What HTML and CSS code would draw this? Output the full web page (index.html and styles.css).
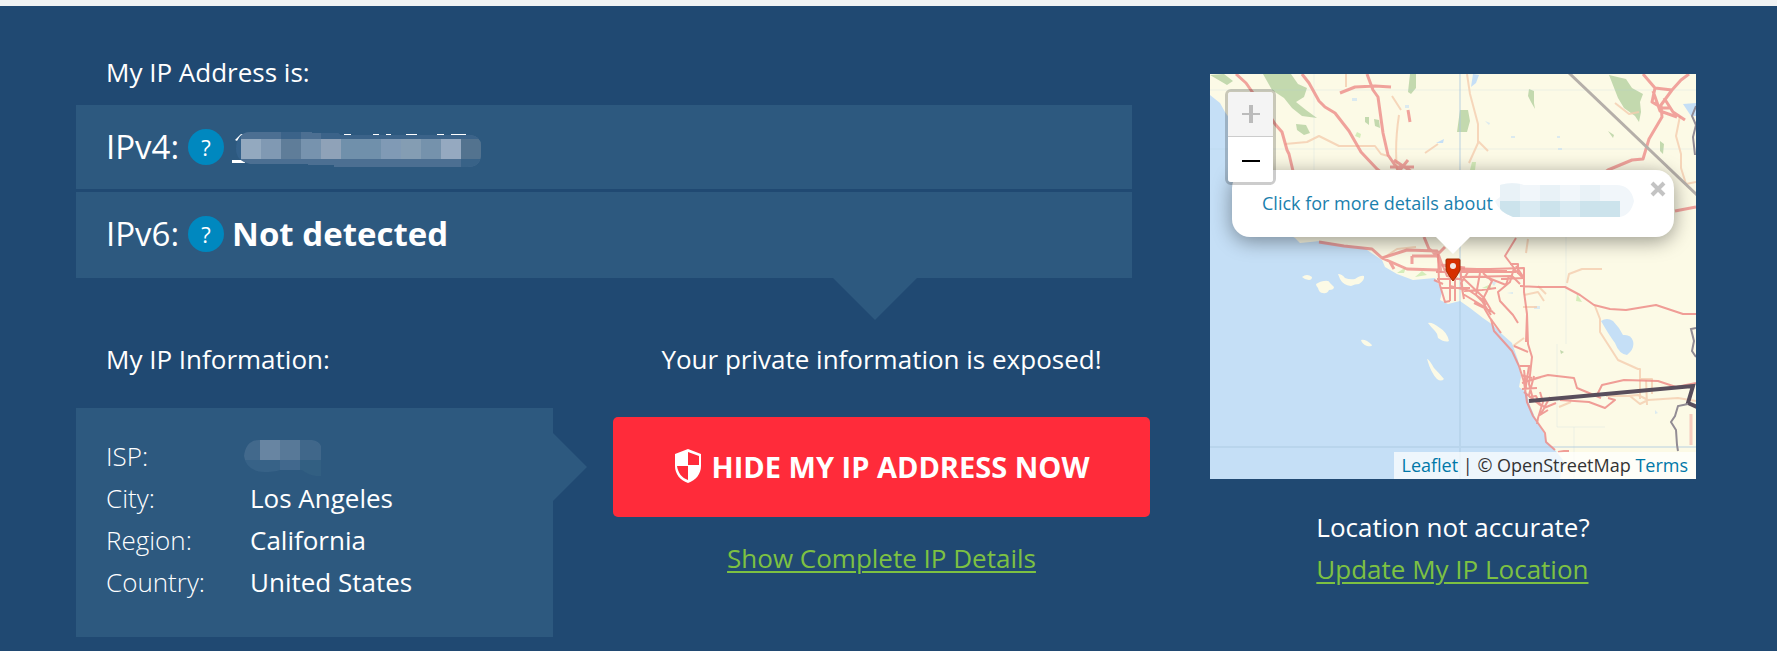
FILE: index.html
```html
<!DOCTYPE html>
<html lang="en">
<head>
<meta charset="utf-8">
<title>My IP Address</title>
<link rel="stylesheet" href="styles.css">
</head>
<body>
<main class="page">
  <section class="address">
    <h2 class="title">My IP Address is:</h2>
    <div class="ip-list">
      <div class="ip-row">
        <span class="ip-label">IPv4:</span>
        <button class="help" type="button" aria-label="About IPv4">?</button>
        <a class="ip-link" href="#ipv4" aria-label="IPv4 address">
          <svg class="redacted-ip" width="249" height="35" viewBox="0 0 249 35">
            <g fill="#fff">
              <path d="M3 8 9 2h2v1L5 9z"/>
              <path d="M0 28h13v3H0z"/>
              <path d="M112 2h7v1h-7zM141 2h6v1h-6zM154 2h5v1h-5zM174 2h11v1h-11zM205 2h7v1h-7zM219 2h15v1h-15z"/>
            </g>
            <clipPath id="ipShape"><path d="M4 17C4 7 9 0 18 0H80V1H104Q107 1 108 3H238Q249 4 249 14V22Q249 35 235 35H102V33H76V32H18Q4 29 4 17z"/></clipPath>
            <g clip-path="url(#ipShape)" shape-rendering="crispEdges">
              <path fill="#4c6f92" d="M9 0h240v35H9z"/>
              <path fill="#34618a" d="M0 0h9v35H0z"/>
              <path fill="#3b6389" d="M49 0h20v7H49zM89 0h160v7H89z"/>
              <path fill="#93a9bf" d="M9 7h20v20H9z"/>
              <path fill="#8099b3" d="M29 7h20v20H29z"/>
              <path fill="#5f7d99" d="M49 7h20v20H49z"/>
              <path fill="#7793ae" d="M69 7h20v20H69z"/>
              <path fill="#8fa2b8" d="M89 7h20v20H89z"/>
              <path fill="#7090ab" d="M109 7h40v20h-40z"/>
              <path fill="#809ab5" d="M149 7h20v20h-20z"/>
              <path fill="#849db3" d="M169 7h20v20h-20z"/>
              <path fill="#7592ac" d="M189 7h20v20h-20z"/>
              <path fill="#95a9c0" d="M209 7h20v20h-20z"/>
              <path fill="#53738f" d="M229 7h20v20h-20z"/>
              <path fill="#386287" d="M229 27h20v8h-20z"/>
            </g>
          </svg>
        </a>
      </div>
      <div class="ip-row">
        <span class="ip-label">IPv6:</span>
        <button class="help" type="button" aria-label="About IPv6">?</button>
        <strong class="ip-value">Not detected</strong>
      </div>
    </div>
  </section>

  <section class="info">
    <h2 class="title">My IP Information:</h2>
    <div class="info-box">
      <table class="info-table">
        <tr><th scope="row">ISP:</th><td>
          <svg class="redacted-isp" width="77" height="36" viewBox="0 0 77 36">
            <clipPath id="ispShape"><path d="M0 16Q2 0 15 0H68Q75 1 77 6V36H72Q64 35 58 30H36Q30 32 20 32Q2 31 0 16z"/></clipPath>
            <g clip-path="url(#ispShape)" shape-rendering="crispEdges">
              <path fill="#42698c" d="M0 0h16v20H0z"/>
              <path fill="#6885a2" d="M16 0h20v20H16z"/>
              <path fill="#587998" d="M36 0h20v20H36z"/>
              <path fill="#40678a" d="M56 0h21v20H56z"/>
              <path fill="#376287" d="M0 20h36v16H0z"/>
              <path fill="#41688d" d="M36 20h20v16H36z"/>
              <path fill="#325f82" d="M56 20h21v16H56z"/>
            </g>
          </svg>
        </td></tr>
        <tr><th scope="row">City:</th><td>Los Angeles</td></tr>
        <tr><th scope="row">Region:</th><td>California</td></tr>
        <tr><th scope="row">Country:</th><td>United States</td></tr>
      </table>
    </div>
  </section>

  <section class="cta">
    <p class="warning">Your private information is exposed!</p>
    <button class="hide-button" type="button">
      <svg class="shield" width="28" height="34" viewBox="0 0 28 34" aria-hidden="true">
        <path fill="#fff" fill-rule="evenodd" d="M14 0 27 5V17C27 25 22 31 14 34 6 31 1 25 1 17V5zM14 3V16H25V7zM3 17C4 24 8 29 14 31V17z"/>
      </svg>
      <span>HIDE MY IP ADDRESS NOW</span>
    </button>
    <a class="green-link" href="#details">Show Complete IP Details</a>
  </section>

  <section class="location">
    <div class="map">
      <svg class="tiles" viewBox="0 0 486 405" preserveAspectRatio="xMidYMid slice" aria-hidden="true">
        <rect width="486" height="405" fill="#fcfae6"/>
        <path fill="#c5dff6" d="M0 21 10 29 15 38 22 48 40 110 60 150 85 164 90 169 110 167 133 171 153 173 160 178 172 186 175 193 187 200 203 206 225 204 230 213 232 218 230 226 238 230 250 227 260 234 273 244 283 251 293 261 302 269 308 286 311 303 309 313 317 319 319 329 327 348 334 359 337 368 345 376 353 386 350 405H0z"/>
        <g fill="#fcfae6">
          <path d="M92 203q5-4 10 0 0 3-3 3-4 0-7-3zM106 210q5-3 8-3 5-1 6 2l4 4q0 3-5 3-2 4-6 3-4 0-5-5-2-2-2-4zM128 200q4 0 7 4 5 2 10 1 6-4 9-3 1 4-5 8-4 0-8 2-8-1-11-7zM151 266q5-1 11 5 0 2-5 1-5-2-6-6zM218 249q4-1 12 5 7 4 9 13-4 2-11-3 0-4-3-7-4-4-7-8zM217 285q2 0 7 9 5 5 10 11-3 3-7 0-6-6-10-20z"/>
        </g>
        <g fill="#c5dff6">
          <path d="M391 247q6-4 12 0 6 6 10 14 8-1 10 6 2 8-6 14-8-1-12-12-6-8-14-22zM473 30l13-1v13h-5zM263 0l6 1-3 8-5 4zM226 69l8-4-1 4z"/>
          <path opacity=".6" d="M142 24h5v3h-5zM195 31h4v3h-4zM275 47l5 2-1 2zM301 62h4v2h-4zM347 62h3v2h-3zM348 74h4v2h-4zM445 336l3 3-3 1zM324 232h6v3h-6zM281 208l6-1-3 5zM297 219l6-1v2z"/>
        </g>
        <g fill="#c3d9ae">
          <path d="M53 0h28l7 10 9 4-3 9-8 5 10 8 11 8-15-2-10-8-8-10-12-8zM0 1l14-1 9 7-6 4zM86 50l10 1 4 8-6 2-7-5zM200 0h6v14l-5 6-3-2zM155 43h4v8l-4-3zM164 45l5 1 1 8-5-2zM250 36h8l2 11-3 11h-10zM319 15l5 2v12l1 6-4-7-3-6zM399 1l17 4 6 9 11 6-3 8 1 10-2 10-4-6-11-8-6-10zM450 67l4 3-1 10-3-3zM398 57l6 4-1 3zM350 276l4 2-3 2z"/>
          <path fill="#d5edba" d="M147 58l4 2-1 4-5-2zM262 88h4l-1 8h-5zM187 199l9-6-2 6zM272 214l9-4v5zM205 203l7-6 5 4zM367 220l5 8-6-1z"/>
        </g>
        <g fill="none" stroke="#a8c6de" stroke-opacity=".4">
          <path stroke-width="2" d="M250 0V405M0 373H486"/>
          <path d="M0 16H486M0 75H486M356 160V270M104 0V96M347 270V353M347 353H395M364 353V405" stroke-opacity=".2"/>
        </g>
        <g class="minor">
          <path d="M75 70l22-2 12-6 20 10h36l6 8 7 2"/>
          <path d="M187 96c-2-20 0-42 2-55M215 79l13-9M136 13V0M182 22l9 14M257 0l3 20 8 30v19l-9 20M268 67l10 10M405 29l14 11 10-2M470 42l-4 20 5 18v14l5 16 10-2M357 209l2-9 13-5h20M385 232l5 13v13l18 28 20 9h2v30M303 272l11-8M313 233h14M328 212l8 8M396 322h22l10-1 10 5 30-2 18 3M349 333l12-5M420 322l10 8 8-4M436 305l1 26M430 305h12v15"/>
          <path d="M172 185l15-10 19-2M318 165l-2 14M314 221l14-3 6 9"/>
        </g>
        <g class="roads">
          <path d="M26 0l10 9 7 10 15 20 7 11 7 8 5 18 2 4 4 17"/>
          <path d="M92 0l7 9 10 18 6 6 10 6 14 18 12 21 16 17 14 12"/>
          <path d="M157 0l6 16 5 7 5 36 5 22 11 16M130 19l15-6 20-1 16 1M198 36l2 12M180 93h24M184 86l18 12M198 86l-8 10"/>
          <path d="M433 0l12 14-3 14 10 6h8M445 14l17 2 9-10 8-6M462 16l-11 15 1 12-13 22-6 20-11 1-24 10-10 8M443 17l7 20 17 6M454 24l9 14 12 8M465 137l21-4"/>
          <path d="M109 168l25 4 28 3 10 9 25-8 30 1 5 14 23 3M172 184l25 11 31 1M180 188l4 7M202 182v8M202 182h26M214 163l5 12 9 6 3 17M228 180l7-7M222 177l6 6"/>
        </g>
        <g class="city">
          <path d="M228 180l1 28 6 20 5-1M240 227V190M245 227V193M250 192l3 28 20 12 7 12 11 15M227 205h24M230 214h30M226 198h80M237 194l60 2M250 203l52-1M254 205l20 19 7 12M270 199l-4 22 10 10M240 212l20 5 16 11M260 195l-9 14 3 16M273 199l9 8-10 20 9 14M276 203l20 8 3-9M247 196l67-2v10l-23 1M281 237l4 3M254 217l18-1 14-2M264 229l19 9M232 190l5 12 16 4M224 206l9 4"/>
          <path d="M306 164l-11 18 9 12-4 14-12 10 2 9 13 14 5 8M306 192l8 12v14l3 22-1 28M302 202l8 8M303 194l10 10M300 190h8v10M310 212l18 1h27l15 8 14 10 16 4 16 1 30-5 27 9h23"/>
          <path d="M281 245l3 12 18 20 7 15 5 16 3 20 6 14 12 17 1 9 9 8M304 272l14 6M317 240l1 30 4 13-3 27 4 15M310 292h10M311 301l11 3M312 309l19-6M312 315l15-1M314 296l2 17M319 292l-4 26M324 302l-5 19M319 323l7-1 5 10M326 328l9 5-5 8 8-5M314 318l16 13M330 318l3 10-5 16-1 6M323 305l15-4 26 3 3 10 24 10M350 326l29 2 16 6 10-8-7-2M386 323l6-12 22-5 34 1 18 6 20-4M346 329l-12 5 6-11"/>
          <path opacity=".5" stroke-width="3" d="M481 340v31"/>
          <path d="M348 378l6-1 5 0"/>
        </g>
        <g fill="none" stroke="#8e8583">
          <path stroke="#b5afa9" stroke-width="3" d="M359-1 487 121"/>
          <path stroke="#594e5c" stroke-width="4" d="M319 327 483 312 478 329 487 333"/>
          <path stroke="#928c94" stroke-width="2" d="M478 330l-10 2-3 10-4 6 5 8 1 15 1 6M486 32l-4 10 4 9-3 12 2 18M486 254l-5 1 3 12-2 10 4 6"/>
        </g>
      </svg>

      <div class="popup">
        <a class="popup-link" href="#more">Click for more details about</a>
        <svg class="redacted-popup" width="139" height="34" viewBox="0 0 139 34">
          <clipPath id="popShape"><path d="M0 18L5 14V2Q14-1 26 1L29 2H121Q136 2 139 18Q136 32 125 34H18Q4 29 0 18z"/></clipPath>
          <g clip-path="url(#popShape)" shape-rendering="crispEdges">
            <path fill="#f1f6fa" d="M0 0h139v34H0z"/>
            <path fill="#e9f2f7" d="M5 0h20v18H5zM85 0h20v18H85zM45 0h20v18H45z"/>
            <path fill="#cce3ec" d="M5 18h20v16H5zM45 18h20v16H45zM85 18h40v16H85z"/>
            <path fill="#d9eaf2" d="M25 18h20v16H25zM65 18h20v16H65z"/>
          </g>
        </svg>
        <button class="close" type="button" aria-label="Close popup">
          <svg width="16" height="16" viewBox="0 0 16 16"><path d="M2 2 14 14M14 2 2 14" stroke="#c3c3c3" stroke-width="4"/></svg>
        </button>
      </div>
      <svg class="marker" width="16" height="24" viewBox="0 0 16 24" aria-hidden="true">
        <path d="M1 2Q1 1 2 1H14Q15 1 15 2V12Q13 17 8 23 3 17 1 12z" fill="#d63000" stroke="#9c2b00"/>
        <circle cx="8" cy="8" r="3" fill="#f3e9e4"/>
      </svg>

      <div class="zoom">
        <button class="zoom-button" type="button" aria-label="Zoom in" disabled>
          <svg width="20" height="20" viewBox="0 0 20 20"><path d="M1 9h18v2H1z" fill="#bbb"/><path d="M8 1h4v18H8z" fill="#bbb"/></svg>
        </button>
        <button class="zoom-button" type="button" aria-label="Zoom out">
          <svg width="20" height="20" viewBox="0 0 20 20"><path d="M1 10h18v2H1z" fill="#000"/></svg>
        </button>
      </div>
      <div class="attribution"><a href="#leaflet">Leaflet</a> | © OpenStreetMap <a href="#terms">Terms</a></div>
    </div>
    <div class="accuracy">
      <p>Location not accurate?</p>
      <a class="green-link" href="#update">Update My IP Location</a>
    </div>
  </section>
</main>
</body>
</html>
```
FILE: styles.css
```css
* { box-sizing: border-box; }

body {
  margin: 0;
  min-height: 100vh;
  background: #204972;
  border-top: 6px solid #f0f3f4;
  color: #fff;
  font-family: "Open Sans", "Noto Sans", sans-serif;
  font-size: 26px;
  line-height: 36px;
}

h2, p { margin: 0; }
button { font: inherit; border: 0; padding: 0; cursor: pointer; }
svg { display: block; }

.page {
  display: grid;
  grid-template-columns: 477fr 537fr 486fr;
  column-gap: 60px;
  padding: 48px 81px 0 76px;
}

.title { font-size: 26px; font-weight: 400; padding-left: 30px; }

.address { grid-column: 1 / 3; margin-right: 18px; }

.ip-list {
  position: relative;
  display: grid;
  gap: 3px;
  margin-top: 15px;
}
.ip-list::after {
  content: "";
  position: absolute;
  top: 100%;
  right: 215px;
  width: 84px;
  height: 42px;
  background: #2d597f;
  clip-path: polygon(0 0, 100% 0, 50% 100%);
}

.ip-row {
  display: flex;
  align-items: center;
  height: 84px;
  padding-left: 30px;
  background: #2d597f;
  font-size: 33px;
}
.ip-row:last-child { height: 86px; padding-bottom: 2px; }
.redacted-ip { margin-top: 5px; }

.help {
  width: 36px;
  height: 36px;
  margin: 0 8px 0 9px;
  border-radius: 50%;
  background: #0088bf;
  color: #fff;
  font-size: 22px;
  line-height: 36px;
}

.info { margin-top: 63px; }
.info-box {
  position: relative;
  margin-top: 31px;
  padding: 27px 30px 34px;
  background: #2d597f;
}
.info-box::after {
  content: "";
  position: absolute;
  top: 25px;
  left: 100%;
  width: 34px;
  height: 68px;
  background: #2d597f;
  clip-path: polygon(0 0, 100% 50%, 0 100%);
}
.info-table { border-collapse: collapse; line-height: 42px; }
.info-table th { width: 144px; padding: 0; font-weight: 300; text-align: left; }
.info-table td { height: 42px; padding: 0; vertical-align: top; }
.redacted-isp { margin: 5px 0 0 -6px; }

.cta {
  display: flex;
  flex-direction: column;
  align-items: center;
  margin-top: 63px;
}
.hide-button {
  display: flex;
  align-items: center;
  justify-content: center;
  gap: 10px;
  width: 100%;
  height: 100px;
  margin: 40px 0 23px;
  border-radius: 5px;
  background: #ff2b3a;
  color: #fff;
  font-size: 29px;
  font-weight: 700;
}
.shield { margin-bottom: 3px; }
.green-link { color: #7dc142; text-underline-offset: 3px; text-decoration-thickness: 2px; }

.location { grid-column: 3; grid-row: 1 / 3; margin-top: 20px; }
.map { position: relative; height: 405px; overflow: hidden; font-size: 18px; }
.tiles { width: 100%; height: 100%; }
.minor, .roads, .city { fill: none; stroke-linejoin: round; }
.minor { stroke: #f5ceb0; stroke-width: 2; opacity: .8; }
.roads { stroke: #ee8d89; stroke-width: 3; opacity: .8; }
.city { stroke: #ee8d89; stroke-width: 2; opacity: .85; }

.popup {
  position: absolute;
  top: 96px;
  left: 22px;
  right: 22px;
  display: flex;
  align-items: center;
  height: 67px;
  padding: 0 0 2px 30px;
  border-radius: 18px;
  background: #fff;
  box-shadow: 0 4px 20px rgba(0, 0, 0, .4);
}
.popup::after {
  content: "";
  position: absolute;
  top: 100%;
  left: calc(50% - 17px);
  width: 34px;
  height: 17px;
  background: #fff;
  clip-path: polygon(0 0, 100% 0, 50% 100%);
}
.popup a, .attribution a { color: #0078a8; text-decoration: none; }
.popup .popup-link { color: #1a80ad; }
.redacted-popup { margin: 0 0 6px 2px; }
.close { position: absolute; top: 11px; right: 8px; background: none; }

.marker { position: absolute; top: 184px; left: calc(50% - 8px); }

.zoom {
  position: absolute;
  top: 15px;
  left: 15px;
  border: 3px solid rgba(0, 0, 0, .2);
  border-radius: 6px;
  background-clip: padding-box;
}
.zoom-button {
  display: grid;
  place-items: center;
  width: 45px;
  height: 45px;
  background: #fff;
  border-radius: 0 0 3px 3px;
}
.zoom-button:first-child { border-bottom: 1px solid #ccc; border-radius: 3px 3px 0 0; background: #f4f4f4; }

.attribution {
  position: absolute;
  right: 0;
  bottom: 0;
  padding: 0 8px;
  background: rgba(255, 255, 255, .7);
  color: #333;
  line-height: 27px;
}

.accuracy { width: fit-content; margin: 27px auto 0; line-height: 42px; }
```
